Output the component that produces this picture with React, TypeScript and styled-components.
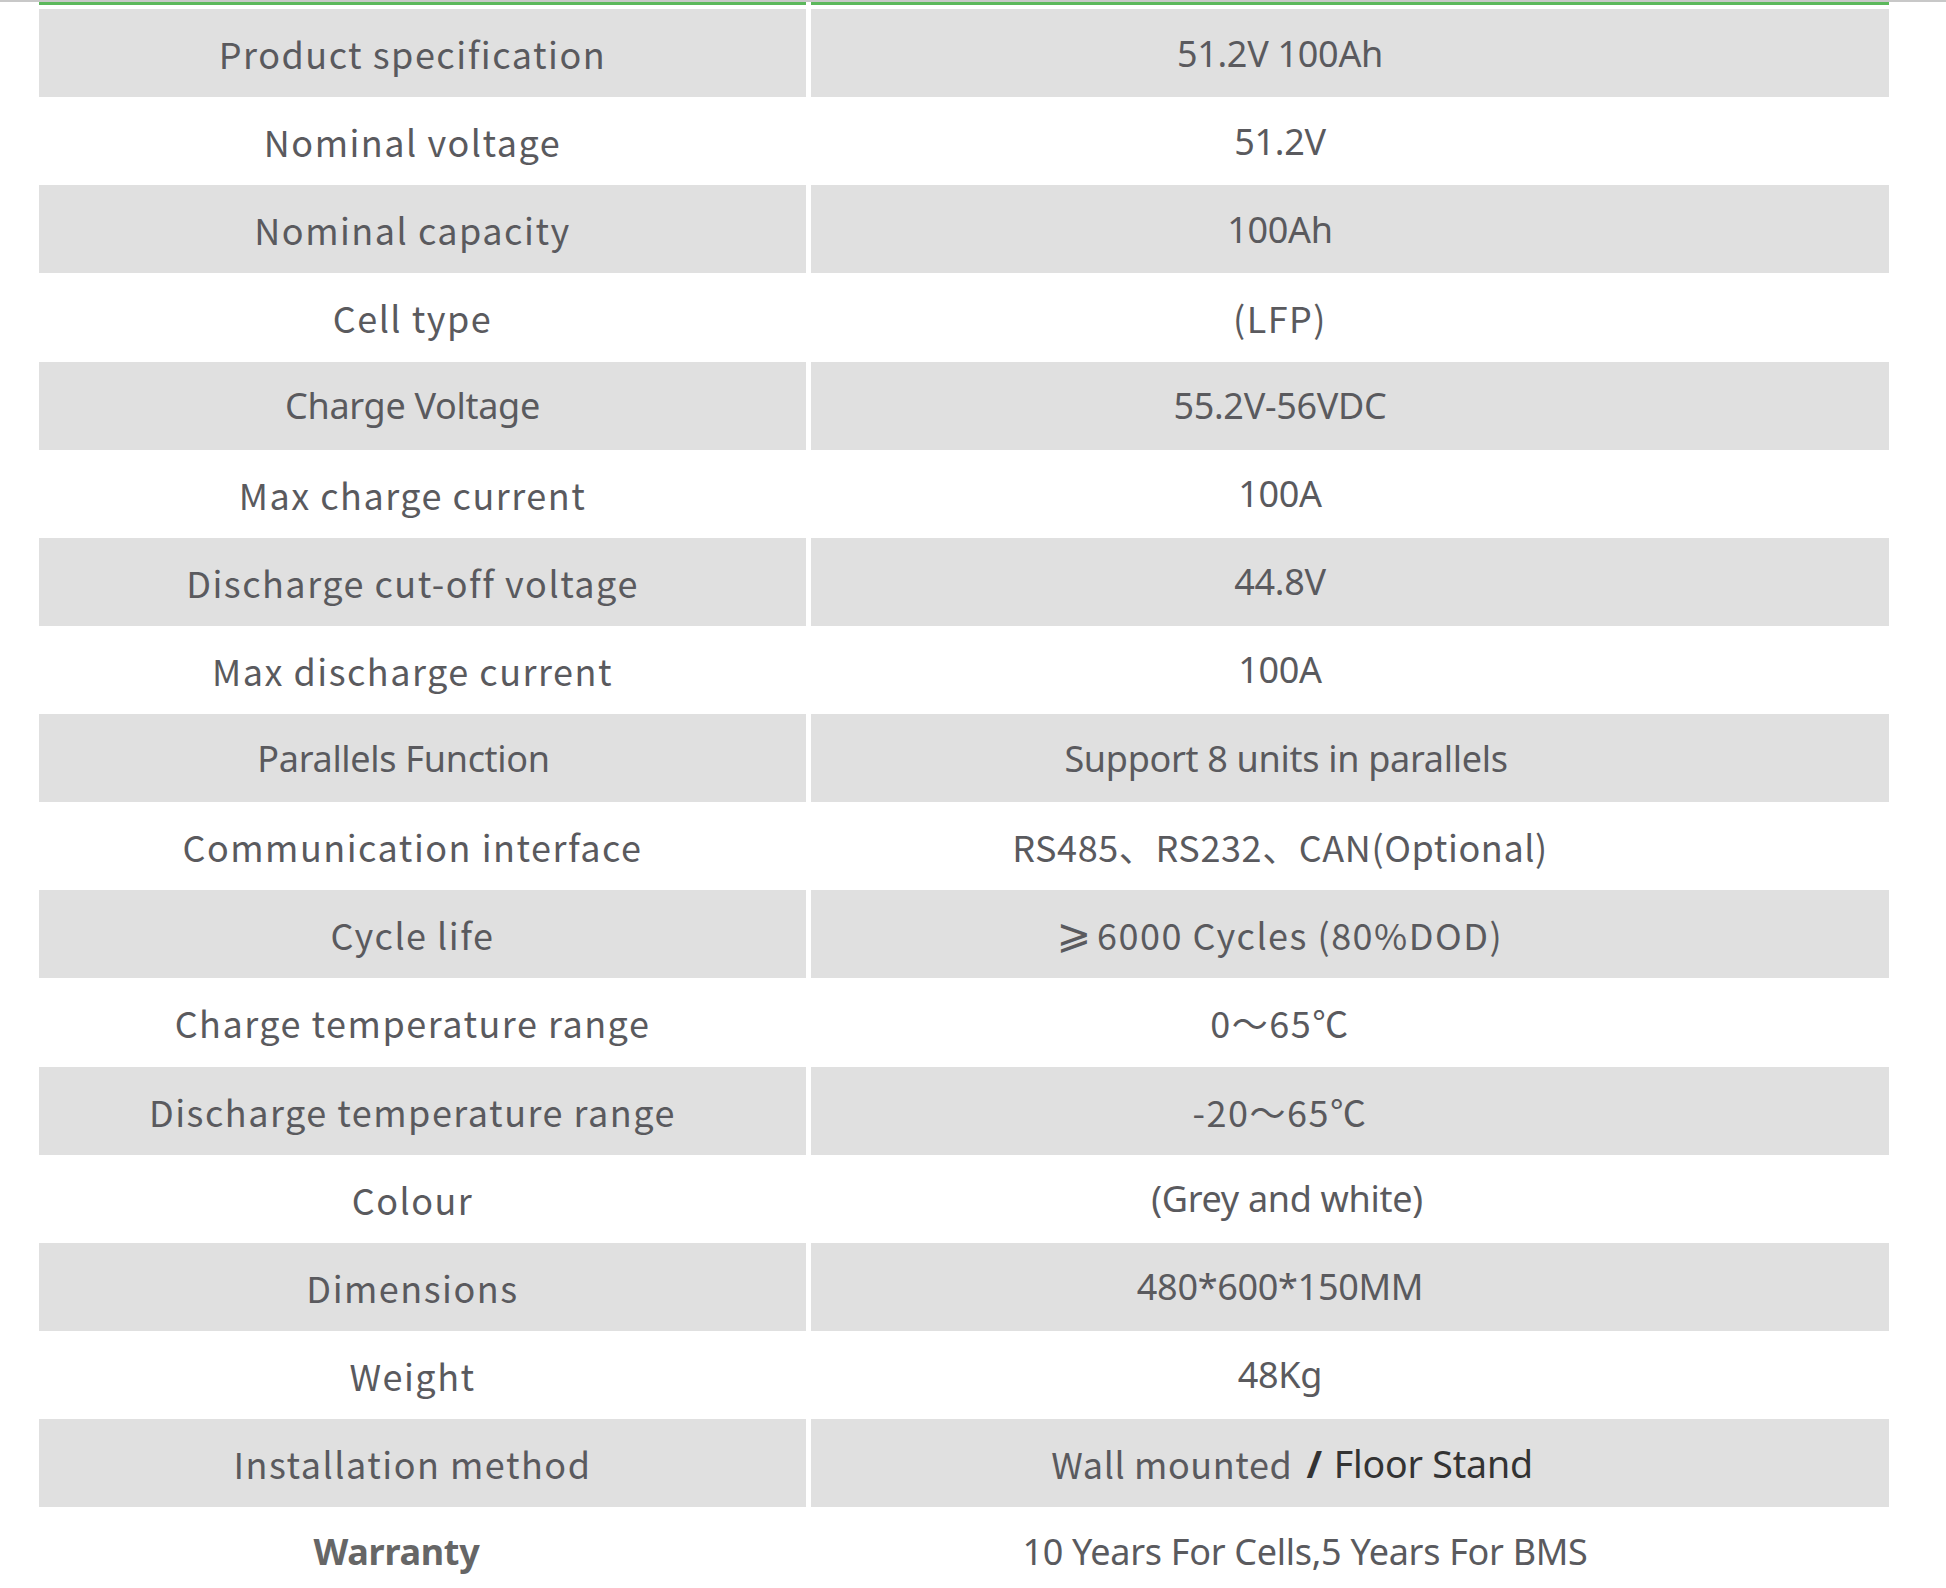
import { FC, Fragment, ReactNode } from 'react';
import styled, { createGlobalStyle, css } from 'styled-components';

const GlobalStyle = createGlobalStyle`
  html, body {
    margin: 0;
    padding: 0;
    background: #ffffff;
  }
`;

type Face = 'cjk' | 'latin';

const cjkFont = css`
  font-family: 'Noto Sans CJK SC', 'Noto Sans', sans-serif;
  letter-spacing: 1.5px;
`;

const latinFont = css`
  font-family: 'Noto Sans', 'Noto Sans CJK SC', sans-serif;
  letter-spacing: -0.3px;
`;

const Page = styled.div`
  width: 1946px;
  height: 1588px;
  overflow: hidden;
  background: #ffffff;
`;

const TopStrip = styled.div`
  height: 2px;
  background: #c8c8c8;
`;

const Table = styled.div`
  display: grid;
  grid-template-columns: 767px 1078px;
  column-gap: 5px;
  margin-left: 39px;
  width: 1850px;
`;

const HeaderEdge = styled.div`
  height: 3px;
  margin-bottom: 4px;
  background: #5cb85c;
`;

interface CellProps {
  $shaded: boolean;
  $face: Face;
  $right?: boolean;
  $shift?: number;
  $bold?: boolean;
  $tight?: boolean;
}

const Cell = styled.div<CellProps>`
  height: 88.125px;
  display: flex;
  align-items: center;
  justify-content: center;
  box-sizing: border-box;
  padding-right: ${(p) => (p.$right ? 140 : 20) + (p.$shift ?? 0)}px;
  background: ${(p) => (p.$shaded ? '#e0e0e0' : '#ffffff')};
  color: ${(p) => (p.$bold ? '#666666' : '#5a5a5e')};
  font-size: 36px;
  font-weight: ${(p) => (p.$bold ? 700 : 400)};
  white-space: nowrap;
  ${(p) => (p.$face === 'cjk' ? cjkFont : latinFont)}
  ${(p) =>
    p.$tight &&
    css`
      letter-spacing: 0.6px;
    `}
`;

const Dark = styled.span`
  color: #333333;
  font-family: 'Noto Sans', sans-serif;
  font-size: 37.5px;
  letter-spacing: -0.2px;
`;

const Slash = styled.span`
  font-weight: 700;
  margin: 0 12px 0 14px;
`;

const GreaterEq = styled.span`
  font-family: 'DejaVu Sans', sans-serif;
  font-size: 1.15em;
  margin-right: 4px;
`;

interface SpecRow {
  label: string;
  value: ReactNode;
  labelFace?: Face;
  valueFace?: Face;
  labelShift?: number;
  valueShift?: number;
  tight?: boolean;
  bold?: boolean;
}

const rows: SpecRow[] = [
  { label: 'Product specification', value: '51.2V 100Ah' },
  { label: 'Nominal voltage', value: '51.2V' },
  { label: 'Nominal capacity', value: '100Ah' },
  { label: 'Cell type', value: '(LFP)', valueFace: 'cjk' },
  { label: 'Charge Voltage', value: '55.2V-56VDC', labelFace: 'latin' },
  { label: 'Max charge current', value: '100A' },
  { label: 'Discharge cut-off voltage', value: '44.8V' },
  { label: 'Max discharge current', value: '100A' },
  {
    label: 'Parallels Function',
    value: 'Support 8 units in parallels',
    labelFace: 'latin',
    labelShift: 18,
    valueShift: -12,
  },
  { label: 'Communication interface', value: 'RS485、RS232、CAN(Optional)', valueFace: 'cjk', tight: true },
  {
    label: 'Cycle life',
    value: (
      <>
        <GreaterEq>⩾</GreaterEq>6000 Cycles (80%DOD)
      </>
    ),
    valueFace: 'cjk',
  },
  { label: 'Charge temperature range', value: '0～65℃', valueFace: 'cjk' },
  { label: 'Discharge temperature range', value: '-20～65℃', valueFace: 'cjk' },
  { label: 'Colour', value: '(Grey and white)', valueShift: -14 },
  { label: 'Dimensions', value: '480*600*150MM' },
  { label: 'Weight', value: '48Kg' },
  {
    label: 'Installation method',
    value: (
      <>
        Wall mounted
        <Dark>
          <Slash>/</Slash>Floor Stand
        </Dark>
      </>
    ),
    valueFace: 'cjk',
    valueShift: -24,
    tight: true,
  },
  {
    label: 'Warranty',
    value: '10 Years For Cells,5 Years For BMS',
    labelFace: 'latin',
    labelShift: 32,
    valueShift: -50,
    bold: true,
  },
];

const App: FC = () => (
  <Page>
    <GlobalStyle />
    <TopStrip />
    <Table>
      <HeaderEdge />
      <HeaderEdge />
      {rows.map((row, i) => (
        <Fragment key={row.label}>
          <Cell $shaded={i % 2 === 0} $face={row.labelFace ?? 'cjk'} $shift={row.labelShift} $bold={row.bold}>
            {row.label}
          </Cell>
          <Cell
            $shaded={i % 2 === 0}
            $face={row.valueFace ?? 'latin'}
            $shift={row.valueShift}
            $tight={row.tight}
            $right
          >
            {row.value}
          </Cell>
        </Fragment>
      ))}
    </Table>
  </Page>
);

export default App;
